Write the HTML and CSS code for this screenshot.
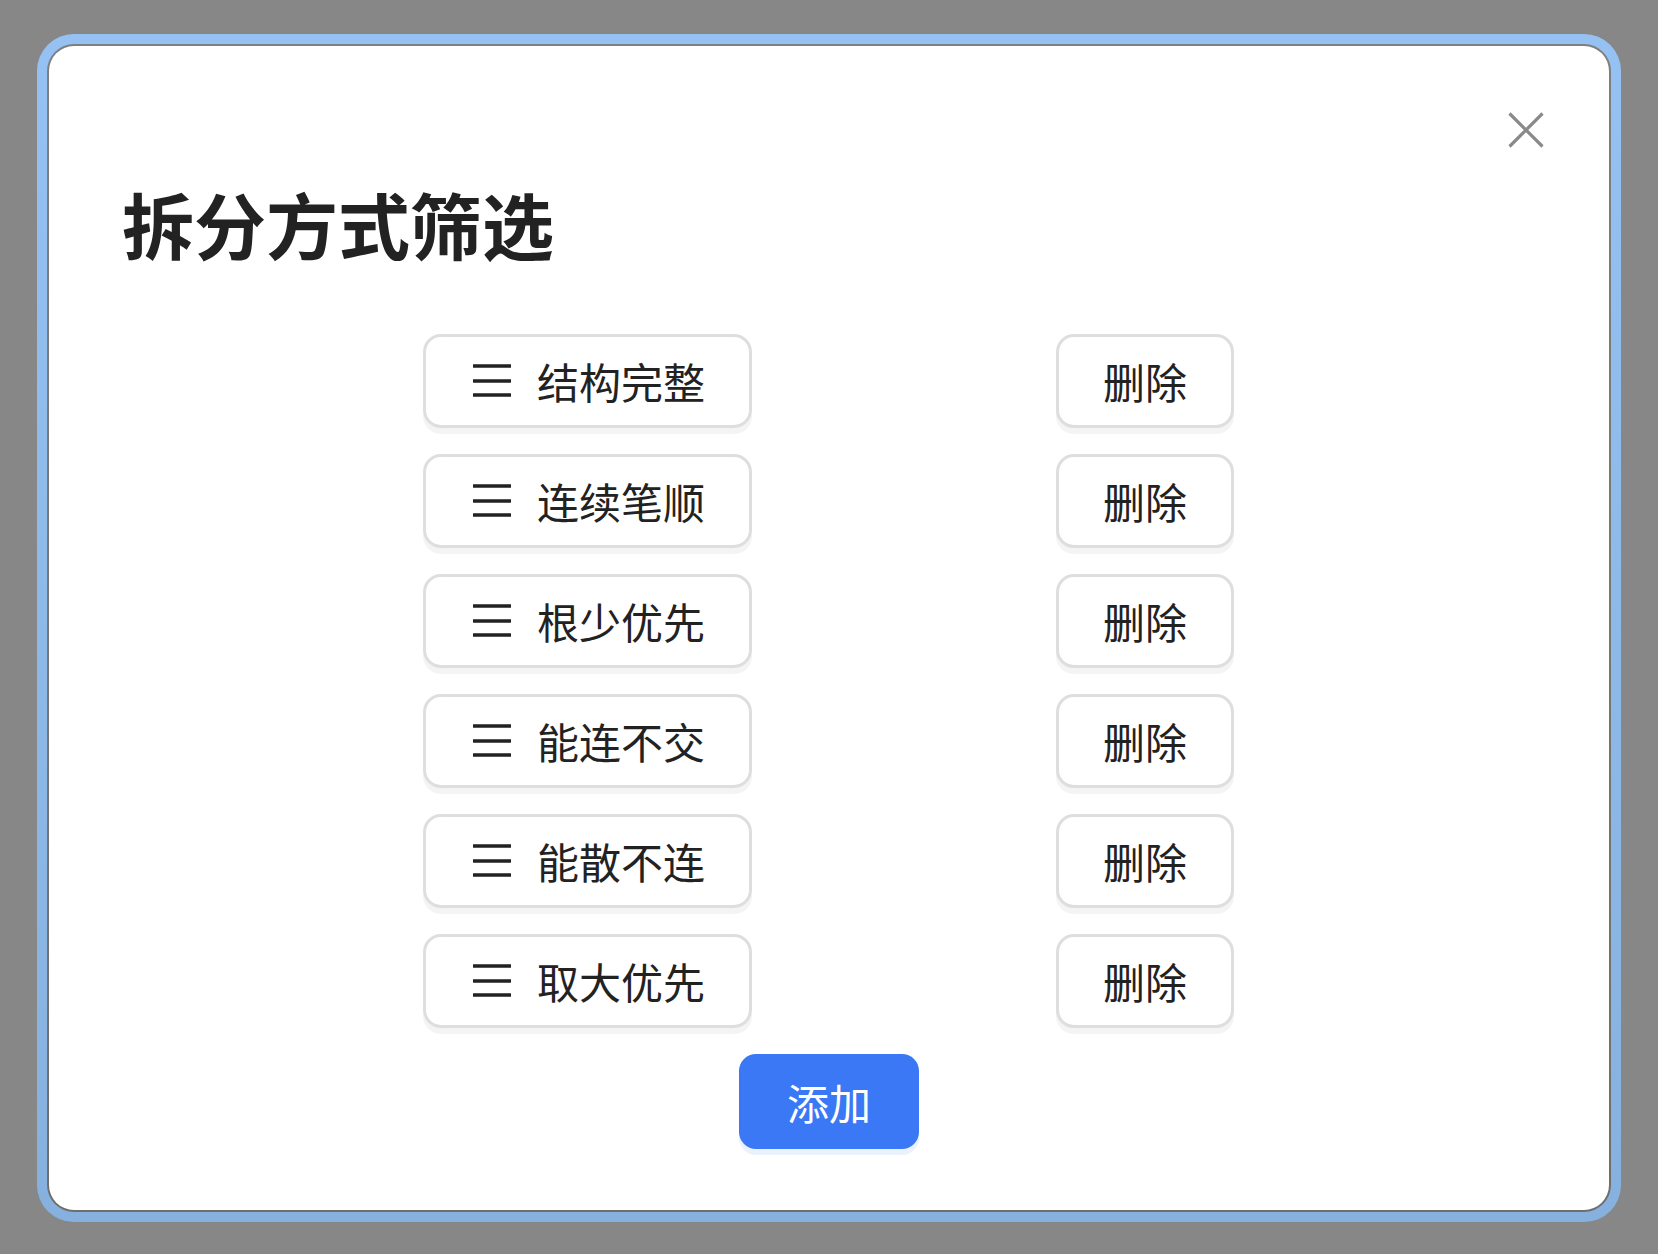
FILE: index.html
```html
<!DOCTYPE html>
<html lang="zh">
<head>
<meta charset="utf-8">
<title>拆分方式筛选</title>
<link rel="stylesheet" href="styles.css">
</head>
<body>
<div class="frame">
  <div class="ring">
    <div class="card">
      <button class="close" aria-label="关闭">
        <svg width="36" height="36" viewBox="0 0 36 36"><path d="M1.5 1.5 L34.5 34.5 M34.5 1.5 L1.5 34.5" stroke="#8a8a8a" stroke-width="3.2" fill="none"/></svg>
      </button>
      <h1 class="title">拆分方式筛选</h1>
      <div class="list">
        <div class="row"><div class="item"><svg class="drag" width="38" height="34" viewBox="0 0 38 34"><path d="M0 2 H38 M0 17 H38 M0 31 H38" stroke="#222" stroke-width="3.4"/></svg><span>结构完整</span></div><button class="del">删除</button></div>
        <div class="row"><div class="item"><svg class="drag" width="38" height="34" viewBox="0 0 38 34"><path d="M0 2 H38 M0 17 H38 M0 31 H38" stroke="#222" stroke-width="3.4"/></svg><span>连续笔顺</span></div><button class="del">删除</button></div>
        <div class="row"><div class="item"><svg class="drag" width="38" height="34" viewBox="0 0 38 34"><path d="M0 2 H38 M0 17 H38 M0 31 H38" stroke="#222" stroke-width="3.4"/></svg><span>根少优先</span></div><button class="del">删除</button></div>
        <div class="row"><div class="item"><svg class="drag" width="38" height="34" viewBox="0 0 38 34"><path d="M0 2 H38 M0 17 H38 M0 31 H38" stroke="#222" stroke-width="3.4"/></svg><span>能连不交</span></div><button class="del">删除</button></div>
        <div class="row"><div class="item"><svg class="drag" width="38" height="34" viewBox="0 0 38 34"><path d="M0 2 H38 M0 17 H38 M0 31 H38" stroke="#222" stroke-width="3.4"/></svg><span>能散不连</span></div><button class="del">删除</button></div>
        <div class="row"><div class="item"><svg class="drag" width="38" height="34" viewBox="0 0 38 34"><path d="M0 2 H38 M0 17 H38 M0 31 H38" stroke="#222" stroke-width="3.4"/></svg><span>取大优先</span></div><button class="del">删除</button></div>
      </div>
      <div class="actions"><button class="add">添加</button></div>
    </div>
  </div>
</div>
</body>
</html>
```
FILE: styles.css
```css
html, body {
  margin: 0;
  padding: 0;
}
body {
  width: 1658px;
  height: 1254px;
  overflow: hidden;
  background: #878787;
  font-family: "Noto Sans CJK SC", "Noto Sans", sans-serif;
  color: #222;
  padding-top: 34px;
  box-sizing: border-box;
}
.frame {
  margin-left: 37px;
  width: 1584px;
  height: 1188px;
  box-sizing: border-box;
  padding: 10px;
  border-radius: 37px;
  background: linear-gradient(to bottom, #95c2f3, #86b1df);
}
.ring {
  height: 100%;
  box-sizing: border-box;
  padding: 2px;
  border-radius: 27px;
  background: linear-gradient(to bottom, #7f7f7f, #6e6e6e);
}
.card {
  position: relative;
  height: 100%;
  box-sizing: border-box;
  background: #fff;
  border-radius: 25px;
  padding: 141px 0 0 73px;
}
.close {
  position: absolute;
  top: 66px;
  right: 65px;
  width: 36px;
  height: 36px;
  padding: 0;
  border: 0;
  background: none;
  display: block;
}
.close svg { display: block; }
.title {
  margin: 0;
  font-size: 72px;
  line-height: 72px;
  font-weight: 700;
  color: #222;
}
.list {
  margin: 75px 0 0 301px;
  width: 811px;
  display: flex;
  flex-direction: column;
  gap: 26px;
}
.row {
  display: flex;
  justify-content: space-between;
  align-items: center;
}
.item {
  width: 329px;
  height: 94px;
  box-sizing: border-box;
  border: 3px solid #dedede;
  border-radius: 18px;
  box-shadow: 0 6px 0 #f4f4f4;
  display: flex;
  align-items: center;
  padding-left: 47px;
  gap: 26px;
  font-size: 42px;
  line-height: 1;
  color: #222;
}
.drag { display: block; flex: none; }
.del {
  width: 178px;
  height: 94px;
  box-sizing: border-box;
  border: 3px solid #dedede;
  border-radius: 18px;
  box-shadow: 0 6px 0 #f4f4f4;
  background: #fff;
  font-family: inherit;
  font-size: 42px;
  line-height: 1;
  color: #222;
  padding: 0;
}
.actions {
  margin-left: -73px;
  margin-top: 26px;
  display: flex;
  justify-content: center;
}
.add {
  width: 180px;
  height: 95px;
  border: 0;
  border-radius: 17px;
  background: #3a78f5;
  box-shadow: 0 6px 0 #eaf2fd;
  color: #fff;
  font-family: inherit;
  font-size: 42px;
  line-height: 1;
  padding: 0;
}
```
